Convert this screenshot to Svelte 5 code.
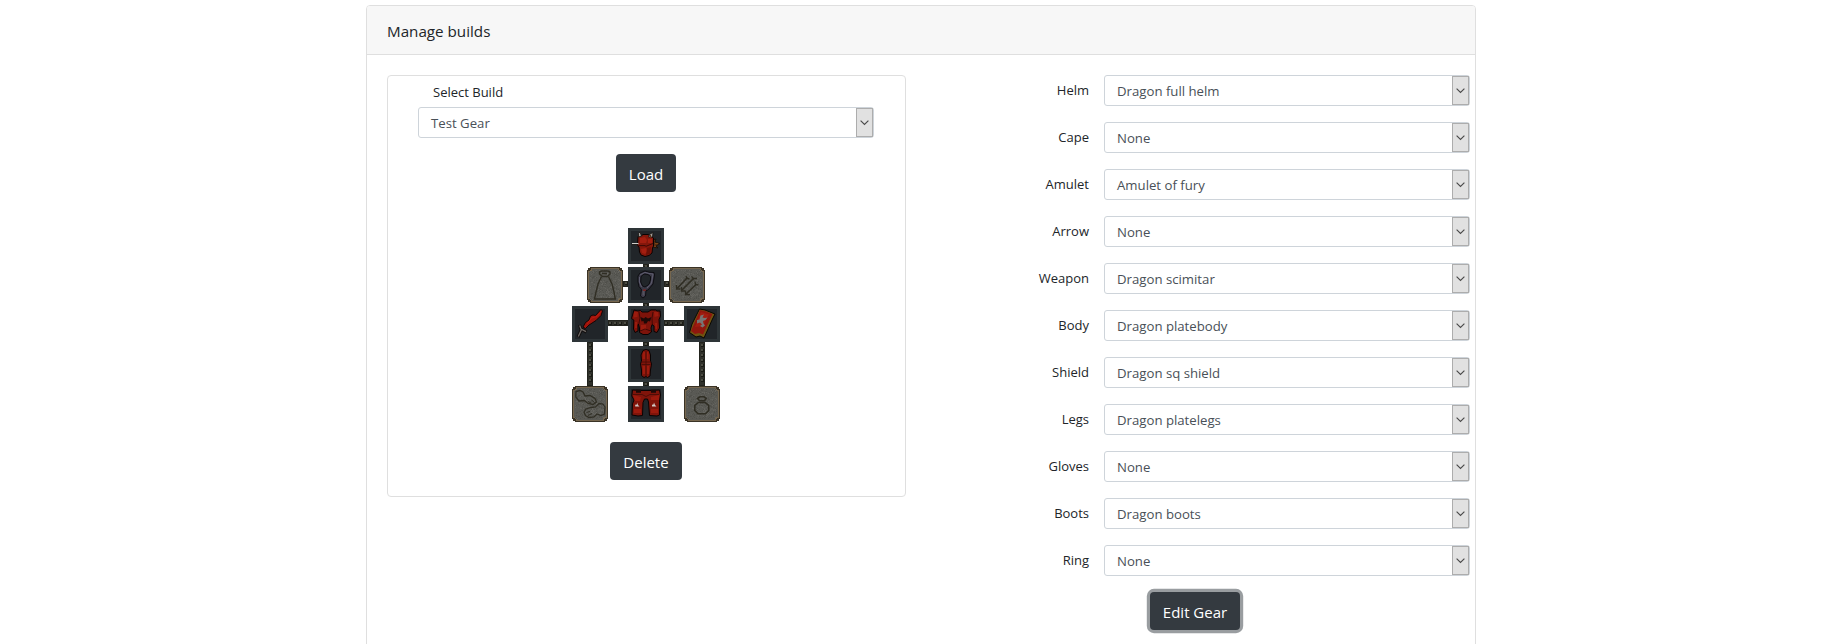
<script>
  const rows = [
    ['Helm', 'Dragon full helm'],
    ['Cape', 'None'],
    ['Amulet', 'Amulet of fury'],
    ['Arrow', 'None'],
    ['Weapon', 'Dragon scimitar'],
    ['Body', 'Dragon platebody'],
    ['Shield', 'Dragon sq shield'],
    ['Legs', 'Dragon platelegs'],
    ['Gloves', 'None'],
    ['Boots', 'Dragon boots'],
    ['Ring', 'None']
  ];

  const filled = [[56, 0], [56, 39], [0, 78], [56, 78], [112, 78], [56, 118], [56, 158]];
  const empty = [[15, 39], [97, 39], [0, 158], [112, 158]];

  // Stone grain for the empty slots
  let seed = 7;
  const rand = () => (seed = (seed * 16807) % 2147483647) / 2147483647;
  const grain = Array.from({ length: 420 }, () => ({
    x: 3 + Math.floor(rand() * 30),
    y: 3 + Math.floor(rand() * 30),
    c: ['#65645f', '#52524d', '#5f5f5a', '#50504b'][Math.floor(rand() * 4)]
  }));
  const links = [
    [71, 36, 6, 3], [71, 75, 6, 3], [71, 114, 6, 4], [71, 154, 6, 4],
    [51, 53, 5, 6], [92, 53, 5, 6], [36, 92, 20, 6], [92, 92, 20, 6],
    [15, 114, 6, 44], [127, 114, 6, 44]
  ];
  const studs = links.flatMap(([x, y, w, h]) => {
    const out = [];
    if (w >= h && h > 4) for (let i = x + 1; i < x + w - 2; i += 5) out.push([i, y + 2]);
    else if (w < h && w > 5) for (let i = y + 2; i < y + h - 2; i += 5) out.push([x + 2, i]);
    else out.push([x + 2, y + 1]);
    return out;
  });
</script>

{#snippet picker(value)}
  <div class="select">
    <span class="value">{value}</span>
    <span class="drop">
      <svg width="9" height="6" viewBox="0 0 9 6"><path d="M.6 .7 4.5 4.5 8.4 .7" fill="none" stroke="#4a4a4a" stroke-width="1.15" /></svg>
    </span>
  </div>
{/snippet}

<main>
  <section class="card">
    <header>Manage builds</header>
    <div class="content">
      <div class="build">
        <div class="label">Select Build</div>
        {@render picker('Test Gear')}
        <button class="load">Load</button>

        <svg class="gear" width="148" height="194" viewBox="0 0 148 194">
          <defs>
            <g id="stone" shape-rendering="crispEdges">
              <path d="M3 0H33V1H35V3H36V33H35V35H33V36H3V35H1V33H0V3H1V1H3Z" fill="#3a3326" />
              <path d="M4 1H32V3H33V4H35V32H33V33H32V35H4V33H3V32H1V4H3V3H4Z" fill="#76674f" />
              <path d="M5 2H31V4H32V5H34V31H32V32H31V34H5V32H4V31H2V5H4V4H5Z" fill="#595954" />
              {#each grain as g}<rect x={g.x} y={g.y} width="1" height="1" fill={g.c} />{/each}
            </g>
          </defs>
          <g shape-rendering="crispEdges">
            {#each links as [x, y, w, h]}
              <rect {x} {y} width={w} height={h} fill="#22231d" />
              <rect x={x + 1} y={y + 1} width={w - 2} height={h - 2} fill="#2f302a" />
            {/each}
            {#each studs as [x, y]}
              <rect {x} {y} width="3" height="3" fill="#1a1b16" />
              <rect {x} {y} width="2" height="2" fill="#4c4d43" />
            {/each}
            {#each filled as [x, y]}
              <rect {x} {y} width="36" height="36" fill="#2e3538" />
              <rect x={x + 3} y={y + 3} width="30" height="30" fill="#212529" />
            {/each}
            {#each empty as [x, y]}
              <use href="#stone" {x} {y} />
            {/each}
          </g>

          <!-- helm -->
          <g transform="translate(56 0)">
            <path d="M24.5 12 28 11 27 14 32 15.5 28 18 30 20 24.5 19Z" fill="#552d11" stroke="#120b06" stroke-width=".7" />
            <path d="M10 8.5 13 8 15 6.5H20L23 8 25.5 10V18L24.5 20 24 25 21 27.5 17 28.5 13 27 11.5 24 11 19 9.5 17Z" fill="#85170b" stroke="#090303" />
            <path d="M12 10 17 9 19 12 18 15H12ZM20 11H24V15H20ZM13 21 18 20 20 23 17 26 14 25Z" fill="#a41e10" />
            <path d="M9 17.6H17L18 18.3 25 15.5" fill="none" stroke="#3c0804" />
            <path d="M19 20 23 19 22 26 18 27Z" fill="#6c1007" />
            <path d="M10.5 9V5.5L12 4 13.5 8ZM20.5 9 22 6 25 4.5 24.5 9Z" fill="#a29f9a" stroke="#17120f" stroke-width=".8" />
            <path d="M22 7H23V10H22Z" fill="#5a3216" />
            <path d="M4 15H10.5V16.2H4Z" fill="#cfcdc9" />
            <path d="M4 16.2H10V17H4Z" fill="#17120f" />
            <path d="M27 15.6H30M26 18.3H28" fill="none" stroke="#8b4c1b" stroke-width=".8" />
          </g>

          <!-- cape -->
          <g transform="translate(15 39)" fill="none" stroke="#302e24" stroke-width="1.4">
            <path d="M12.5 5 14.5 4H21L23 5V7L20.5 9.5H15.5L12.5 7Z" />
            <path d="M15 6.5H20M14.5 9.5 11 17 9 25 7.5 32H28.3L27 25 25 17 21.5 9.5" />
          </g>

          <!-- amulet -->
          <g transform="translate(56 39)">
            <path fill-rule="evenodd" d="M10 9 12 6 17 4 21 5.2 26 5.5 26.5 8 25 17 20 23 18 23.5 17.5 29 15 31 12.5 29 13.5 22.5 11 19.5 10 15ZM13 9.5 12.7 15 14.5 19 17 20 21 17.5 22.5 13 22.5 9.5 20 7.5 16 7Z" fill="#3a3946" stroke="#0a090d" stroke-width=".9" />
            <path d="M12 8 17 5.4 21 6.5 25 7 23.5 16 19 21M11.4 10V15L13.5 20" fill="none" stroke="#636174" stroke-width=".9" />
            <path d="M14.5 24H16.5V28.5H14.5Z" fill="#55525e" />
            <path d="M15 22.5H18V23.8H15Z" fill="#82201b" />
          </g>

          <!-- arrows -->
          <g transform="translate(97 39)" fill="none" stroke="#302e24" stroke-width="1.7">
            <path d="M18.5 10.5 8 21.5M24.5 11.5 13 23M27.5 17 17 27" />
            <path d="M7.5 18V22H11.5M12.5 20V24H16M16.5 23.5V27.5H21M17 9 18 11.5 20.5 12M22.5 9.5 24.5 11.5 28 11.5M26 14.5 26.5 17.5 29.5 18" stroke-width="1.3" />
          </g>

          <!-- scimitar -->
          <g transform="translate(0 78)">
            <path d="M29 3.5 30.5 5 29 9.5 24 14.5 17 19 13.5 22.5 11 21 13.5 16.5 17 14 18.5 10 21 9 23.5 9.5Z" fill="#9e140b" stroke="#0b0303" stroke-width=".9" />
            <path d="M28.5 6 25 10.5 19.5 12 15 18" fill="none" stroke="#bd1c10" stroke-width=".9" />
            <path d="M6 31 9.5 23.5M7.5 19 9 23 14.5 26" stroke="#120e0e" stroke-width="3.2" fill="none" />
            <path d="M6.3 30.5 9.5 23.5M7.7 19.6 9 23 14 25.6" stroke="#6f6965" stroke-width="1.3" fill="none" />
          </g>

          <!-- platebody -->
          <g transform="translate(56 78)">
            <path d="M6 4 10 5 12.5 4.5 14 6H20L23 4H27.5L29 5H32L32.5 10 31 13.5 31.5 22 29 26.5 26 25.5V20L24 18.5 23 22 23.5 26 20 28.5H15L11.5 26.5V22L10.5 18 10 19V25L7 26.5 5.5 23 5.8 14 3.5 12.5Z" fill="#7d130a" stroke="#090303" />
            <path d="M6 6H10L9.5 11 5.5 11.5ZM26 6H30L30.5 10 26.5 11ZM13 19H18V24H13ZM27 17H29V23H27.5ZM7 16H9V22H7Z" fill="#9b1b0e" />
            <path d="M12.5 11 16 12.5 17.5 11 20 12.5 23.5 11 22 15.5 20 15 18.5 17.5H16L15.5 15 13.5 15.5Z" fill="#1d0907" />
            <path d="M11 6 12 12 10.8 18M25 6 24 12 24.3 18M12 25 17 23 23 25" fill="none" stroke="#3b0805" stroke-width=".9" />
          </g>

          <!-- shield -->
          <g transform="translate(112 78)">
            <path d="M15.5 3 21 4 31 8 28.5 13 20 32 16 30 12 31 5.5 26.5 8 18Z" fill="#705411" stroke="#090703" />
            <path d="M16 4 21 5 28.5 8 19 28.5 15 27 11 28 7 25Z" fill="#8f170d" />
            <path d="M17 6 25 8.5 19 20 11 21Z" fill="#a21c10" />
            <path d="M16.5 9.5 20 8.5 18.5 11.5 21 12 23.5 11.5 21.5 14 19 15 19.5 17.5 21 19.5 18.5 21.5 16 20 18 18.5 16 16.5 13 17.5 13 14 15.5 13.5Z" fill="#777574" />
          </g>

          <!-- boots -->
          <g transform="translate(56 118)">
            <path d="M15 4.5 18 3.5 21 4.5 22.5 9V15L23.5 18 22.5 24 22 30 19.5 31.5 18 30.5 16 31.5 13.5 29.5 13.5 24 12.5 18 13.5 15 13 9Z" fill="#80140a" stroke="#090303" />
            <path d="M15 6H17V13H14.5ZM18.8 6H20.5V13H18.8ZM14.5 20H17V28H15ZM19 20H21V28H19Z" fill="#9e1b0e" />
            <path d="M18 5V30M13 16H23M13.5 18.5H22.5" stroke="#4a0c07" stroke-width=".9" fill="none" />
          </g>

          <!-- platelegs -->
          <g transform="translate(56 158)">
            <path d="M4.5 4 14 4.5H22L31.5 4 32.5 9 31.5 15V29L29 30 21.5 29.5 20.5 16 19.5 13H16.5L15 16.5 14.5 29.5 10 30 4 29 4.5 18 6 14 3.8 10Z" fill="#80140a" stroke="#090303" />
            <path d="M5 9 13 11 12 15H7ZM23 11 31 9V14H23ZM6 23H13V27H6ZM23 23H30V27H23Z" fill="#9d1a0d" />
            <path d="M8 3.8H13V6.8H8ZM23 3.8H28V6.8H23Z" fill="#1d0907" />
            <path d="M5 8.5H14L18 10.5 22 8.5H31" fill="none" stroke="#4a0c07" stroke-width=".9" />
            <path d="M9 16.5 10 19 11.5 20.5H7.2V18.8L9 18.4ZM26 16.5 27 19 28.5 20.5H24V18.8L25.5 18.4Z" fill="#cfcac7" />
          </g>

          <!-- gloves -->
          <g transform="translate(0 158)" fill="none" stroke="#302e24" stroke-width="1.3">
            <path d="M4 5.5 8 4.5 11 6 13 10 18 9.5 23 12.5 24.5 16 21 18.5 16 17.5 12.5 14.5 7 15 3.8 11Z" />
            <path d="M16 15.5 19 17M19.5 14 22.5 16.5" stroke-width="1" />
            <path d="M33 21 31 18 27 17.5 23.5 21 19 21.5 14 23 12 26 13.5 29.5 17 31.5 22 31 25 28 29 29.5 32.5 28Z" />
            <path d="M14.5 26.5 18 25.5M16 29.5 20 27.5" stroke-width="1" />
          </g>

          <!-- ring -->
          <g transform="translate(112 158)" fill="none" stroke="#302e24" stroke-width="1.6">
            <path d="M13.5 12.5 16 10.8H20L22.2 12.5 20.5 14.8H15.5Z" />
            <path d="M14.5 16.5H21L24.7 19.5V24.5L21.5 27.7H14L10.8 24.5V19.5Z" />
          </g>
        </svg>

        <button class="delete">Delete</button>
      </div>

      <div class="form">
        {#each rows as [name, value]}
          <div class="row">
            <span class="name">{name}</span>
            {@render picker(value)}
          </div>
        {/each}
        <button class="edit">Edit Gear</button>
      </div>
    </div>
  </section>
</main>

<style>
  :global(body) {
    margin: 0;
    background: #fff;
    overflow: hidden;
  }
  main {
    box-sizing: border-box;
    height: 644px;
    padding: 5px 0 0 366px;
    overflow: hidden;
    font-family: 'Open Sans', 'Noto Sans', sans-serif;
    font-size: 13.2px;
    color: #212529;
  }
  .card {
    box-sizing: border-box;
    width: 1110px;
    height: 660px;
    border: 1px solid #dfdfdf;
    border-radius: 4px;
  }
  header {
    box-sizing: border-box;
    height: 49px;
    padding: 0 20px;
    border-bottom: 1px solid #dfdfdf;
    border-radius: 3px 3px 0 0;
    background: #f7f7f7;
    font-size: 15.2px;
    line-height: 50px;
  }
  .content {
    display: flex;
    justify-content: space-between;
    align-items: flex-start;
    padding: 20px 5px 0 20px;
  }
  .build {
    box-sizing: border-box;
    width: 519px;
    height: 422px;
    padding: 0 31px 0 30px;
    border: 1px solid #dfdfdf;
    border-radius: 4px;
    display: flex;
    flex-direction: column;
    align-items: center;
  }
  .label {
    align-self: flex-start;
    height: 31px;
    padding-left: 15px;
    font-size: 13px;
    line-height: 33px;
  }
  .select {
    box-sizing: border-box;
    display: flex;
    justify-content: space-between;
    width: 100%;
    height: 31px;
    border: 1px solid #ced4da;
    border-radius: 3px;
    color: #495057;
  }
  .value {
    padding-left: 12px;
    line-height: 30px;
  }
  .drop {
    box-sizing: border-box;
    display: flex;
    align-items: center;
    justify-content: center;
    width: 17px;
    height: 29px;
    border: 1px solid #adadad;
    background: #e1e1e1;
  }
  button {
    box-sizing: border-box;
    flex: none;
    height: 38px;
    padding: 0;
    border: 0;
    border-radius: 4px;
    background: #343a40;
    color: #fff;
    font: 15px/40px 'Open Sans', 'Noto Sans', sans-serif;
  }
  .load {
    width: 60px;
    margin-top: 16px;
  }
  .gear {
    display: block;
    flex: none;
    margin: 36px 0 20px;
  }
  .delete {
    width: 72px;
  }
  .form {
    display: flex;
    flex-direction: column;
    align-items: flex-end;
    width: 420px;
  }
  .row {
    display: grid;
    grid-template-columns: 39px 366px;
    column-gap: 15px;
    height: 47px;
  }
  .name {
    justify-self: end;
    font-size: 13px;
    line-height: 31px;
  }
  .edit {
    align-self: flex-start;
    width: 90px;
    margin-left: 100px;
    box-shadow: 0 0 0 3.2px #999da0;
  }
</style>
